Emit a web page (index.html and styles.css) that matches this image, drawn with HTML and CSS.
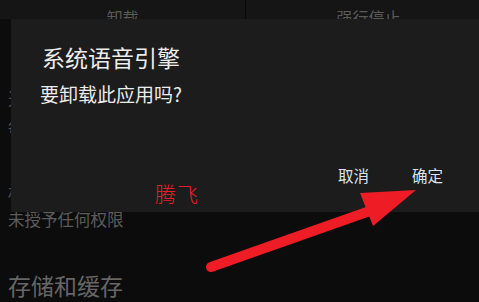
FILE: index.html
```html
<!DOCTYPE html>
<html lang="zh">
<head>
<meta charset="utf-8">
<link rel="stylesheet" href="styles.css">
</head>
<body>
<div class="page">
  <div class="actions">
    <div class="action first">
      <span class="action-icon"></span>
      <span class="action-label">卸载</span>
    </div>
    <div class="divider"></div>
    <div class="action second">
      <span class="action-icon wide"></span>
      <span class="action-label">强行停止</span>
    </div>
  </div>
  <div class="list">
    <div class="row">
      <div class="row-title">通知</div>
      <div class="row-sub">每周约 0 条通知</div>
    </div>
    <div class="row second">
      <div class="row-title">权限</div>
      <div class="row-sub">未授予任何权限</div>
    </div>
    <div class="section">存储和缓存</div>
  </div>

  <div class="dialog">
    <div class="dialog-title">系统语音引擎</div>
    <div class="dialog-msg">要卸载此应用吗?</div>
    <div class="dialog-buttons">
      <span class="btn">取消</span>
      <span class="btn">确定</span>
    </div>
  </div>

  <div class="watermark">腾飞</div>

  <svg class="arrow" width="479" height="302" viewBox="0 0 479 302">
    <line x1="211" y1="267" x2="384" y2="206" stroke="#ee1c25" stroke-width="10" stroke-linecap="round"/>
    <polygon points="360,193 416,190 373,226" fill="#ee1c25"/>
  </svg>
</div>
</body>
</html>
```

FILE: styles.css
```css
* { box-sizing: border-box; }
html, body {
  margin: 0;
  padding: 0;
  background: #0c0c0c;
}
body {
  font-family: "Noto Sans CJK SC", "Noto Sans", sans-serif;
  width: 479px;
  height: 302px;
  overflow: hidden;
}
.page {
  position: relative;
  width: 479px;
  height: 302px;
}
.actions {
  display: flex;
  height: 19px;
  background: #151515;
}
.action {
  flex: 1;
  display: flex;
  flex-direction: column;
  align-items: center;
}
.action.first {
  flex: 0 0 245px;
}
.action.second {
  padding-left: 12px;
}
.action-icon {
  display: block;
  width: 15px;
  height: 2px;
  background: #4a4a4a;
  border-radius: 0 0 2px 2px;
}
.action-icon.wide { width: 25px; }
.action-label {
  margin-top: 9px;
  font-size: 16px;
  line-height: 16px;
  color: #5a5a5a;
  white-space: nowrap;
}
.divider {
  width: 1px;
  background: #050505;
}
.list {
  padding: 69px 0 0 8px;
}
.row-title {
  font-size: 18px;
  line-height: 20px;
  color: #4a4a4a;
}
.row-sub {
  margin-top: 10px;
  font-size: 15px;
  line-height: 18px;
  color: #5a5a5a;
}
.row.second {
  margin-top: 46px;
}
.row.second .row-sub {
  margin-top: 8px;
  font-size: 16.5px;
  line-height: 18px;
  color: #5c5c5c;
}
.section {
  margin-top: 44px;
  font-size: 23px;
  line-height: 26px;
  color: #666;
}
.dialog {
  position: absolute;
  left: 11px;
  top: 19px;
  right: 0;
  height: 193px;
  background: #1c1c1c;
  padding: 27px 0 0 31px;
  display: flex;
  flex-direction: column;
}
.dialog-title {
  font-size: 23px;
  line-height: 23px;
  color: #ececec;
}
.dialog-msg {
  margin-top: 15px;
  margin-left: -2px;
  font-size: 19px;
  line-height: 19px;
  color: #ececec;
}
.dialog-buttons {
  margin-top: 64px;
  display: flex;
  justify-content: flex-end;
  gap: 43px;
  padding-right: 36px;
}
.btn {
  font-size: 15.5px;
  line-height: 16px;
  color: #dbe4ef;
}
.watermark {
  position: absolute;
  left: 155px;
  top: 182px;
  font-size: 21px;
  line-height: 22px;
  letter-spacing: 1px;
  font-weight: 300;
  color: #e3202a;
}
.arrow {
  position: absolute;
  left: 0;
  top: 0;
}
```
